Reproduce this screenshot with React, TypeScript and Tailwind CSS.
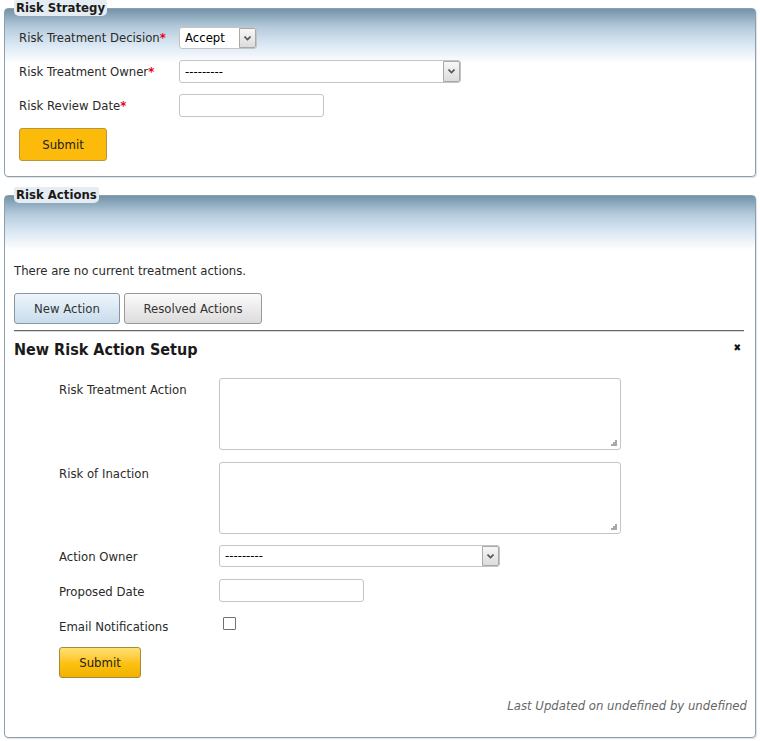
import React from "react";

const panel =
  "rounded-[4px] border border-[#8b9fad] bg-[linear-gradient(to_bottom,#7393a9_0px,#b4cadb_18px,#dbe8f4_36px,#ffffff_54px)] bg-no-repeat shadow-[1px_1px_1px_rgba(0,0,0,0.12)]";
const legend =
  "px-[2px] h-[16px] leading-[15px] rounded-b-[5px] rounded-t-[2px] bg-[#e6edf2] text-[13px] font-bold text-[#1a1a1a]";

function Req() {
  return <span className="text-[#e8001c] font-bold">*</span>;
}

function Select({ width, value, height = "h-[23px]" }: { width: string; value: string; height?: string }) {
  return (
    <div className={`relative ${height} ${width}`}>
      <select className="h-full w-full appearance-none rounded-[3px] border border-[#c4c4c4] bg-white pl-[5px] text-[13px] text-black outline-none">
        <option>{value}</option>
      </select>
      <span className="pointer-events-none absolute right-[1px] top-[1px] bottom-[1px] flex w-[17px] items-center justify-center rounded-r-[2px] border border-[#a9a9a9] bg-gradient-to-b from-[#f7f7f7] to-[#dcdcdc]">
        <svg width="7" height="5" viewBox="0 0 7 5">
          <path d="M0.5 0.5 L3.5 3.5 L6.5 0.5" fill="none" stroke="#555" strokeWidth="1.6" />
        </svg>
      </span>
    </div>
  );
}

function TextInput({ width }: { width: string }) {
  return (
    <input
      type="text"
      className={`h-[23px] rounded-[3px] border border-[#c4c4c4] bg-white px-1 text-[13px] outline-none ${width}`}
    />
  );
}

function TextArea() {
  return (
    <div className="relative h-[72px] w-[402px]">
      <textarea className="h-full w-full resize-none rounded-[3px] border border-[#c4c4c4] bg-white outline-none" />
      <svg className="pointer-events-none absolute bottom-[4px] right-[4px]" width="6" height="6" viewBox="0 0 6 6">
        <rect x="4" y="0" width="2" height="2" fill="#a8a8a8" />
        <rect x="2" y="2" width="2" height="2" fill="#a8a8a8" />
        <rect x="4" y="2" width="2" height="2" fill="#a8a8a8" />
        <rect x="0" y="4" width="2" height="2" fill="#a8a8a8" />
        <rect x="2" y="4" width="2" height="2" fill="#a8a8a8" />
        <rect x="4" y="4" width="2" height="2" fill="#a8a8a8" />
      </svg>
    </div>
  );
}

export default function App() {
  return (
    <div className="w-[760px] min-h-[741px] bg-white px-[4px] font-['DejaVu_Sans_Condensed','DejaVu_Sans',sans-serif] text-[13px] text-[#2a2a2a]">
      <fieldset className={`${panel} min-w-0 px-[14px] pb-[15px] pt-[11px]`}>
        <legend className={`${legend} -ml-[5px]`}>Risk Strategy</legend>
        <div className="flex flex-col gap-[11px]">
          <div className="flex h-[22px] items-center">
            <label className="w-[160px]">
              Risk Treatment Decision<Req />
            </label>
            <Select width="w-[78px]" height="h-[22px]" value="Accept" />
          </div>
          <div className="flex h-[23px] items-center">
            <label className="w-[160px]">
              Risk Treatment Owner<Req />
            </label>
            <Select width="w-[282px]" value="---------" />
          </div>
          <div className="flex h-[23px] items-center">
            <label className="w-[160px]">
              Risk Review Date<Req />
            </label>
            <TextInput width="w-[145px]" />
          </div>
          <div>
            <button className="h-[33px] w-[88px] rounded-[3px] border border-[#b8963a] bg-[#fcbb0a] text-[13px] text-[#222]">
              Submit
            </button>
          </div>
        </div>
      </fieldset>

      <fieldset className={`${panel} mt-[10px] min-w-0 pl-[9px] pr-[8px] pb-[23px] pt-[60px]`}>
        <legend className={legend}>Risk Actions</legend>
        <p className="leading-[16px]">There are no current treatment actions.</p>
        <div className="mt-[14px] flex gap-[4px]">
          <button className="h-[31px] w-[106px] rounded-[3px] border border-[#8797a6] bg-gradient-to-b from-[#eef5fb] to-[#c8dcec] text-[13px] text-[#333]">
            New Action
          </button>
          <button className="h-[31px] w-[138px] rounded-[3px] border border-[#999] bg-gradient-to-b from-[#fbfbfb] to-[#dcdcdc] text-[13px] text-[#333]">
            Resolved Actions
          </button>
        </div>
        <div className="mr-[3px] mt-[6px] h-[2px] border-t border-b border-t-[#6a6a6a] border-b-[#d8d8d8]" />
        <div className="mr-[3px] mt-[7px] flex items-center justify-between">
          <h2 className="text-[16px] font-bold leading-[22px] text-[#1a1a1a]">New Risk Action Setup</h2>
          <span className="mr-[3px] -mt-[6px] text-[10px] font-bold text-[#111]">✖</span>
        </div>

        <div className="ml-[45px] mt-[17px] flex flex-col">
          <div className="flex">
            <label className="w-[160px] pt-[4px] leading-[16px]">Risk Treatment Action</label>
            <TextArea />
          </div>
          <div className="mt-[12px] flex">
            <label className="w-[160px] pt-[4px] leading-[16px]">Risk of Inaction</label>
            <TextArea />
          </div>
          <div className="mt-[11px] flex h-[22px] items-center">
            <label className="w-[160px] pt-[2px]">Action Owner</label>
            <Select width="w-[281px]" height="h-[22px]" value="---------" />
          </div>
          <div className="mt-[12px] flex h-[23px] items-center">
            <label className="w-[160px] pt-[2px]">Proposed Date</label>
            <TextInput width="w-[145px]" />
          </div>
          <div className="mt-[12px] flex h-[23px] items-center">
            <label className="w-[160px] pt-[2px]">Email Notifications</label>
            <input
              type="checkbox"
              className="ml-[4px] -mt-[4px] h-[13px] w-[13px] appearance-none rounded-[1px] border border-[#707070] bg-white"
            />
          </div>
          <div className="mt-[10px]">
            <button className="h-[31px] w-[82px] rounded-[3px] border border-[#a58a3c] bg-gradient-to-b from-[#ffe070] via-[#fdc312] to-[#f1b100] text-[13px] text-[#222]">
              Submit
            </button>
          </div>
        </div>

        <p className="mt-[20px] text-right italic leading-[16px] text-[#666]">
          Last Updated on undefined by undefined
        </p>
      </fieldset>
    </div>
  );
}
